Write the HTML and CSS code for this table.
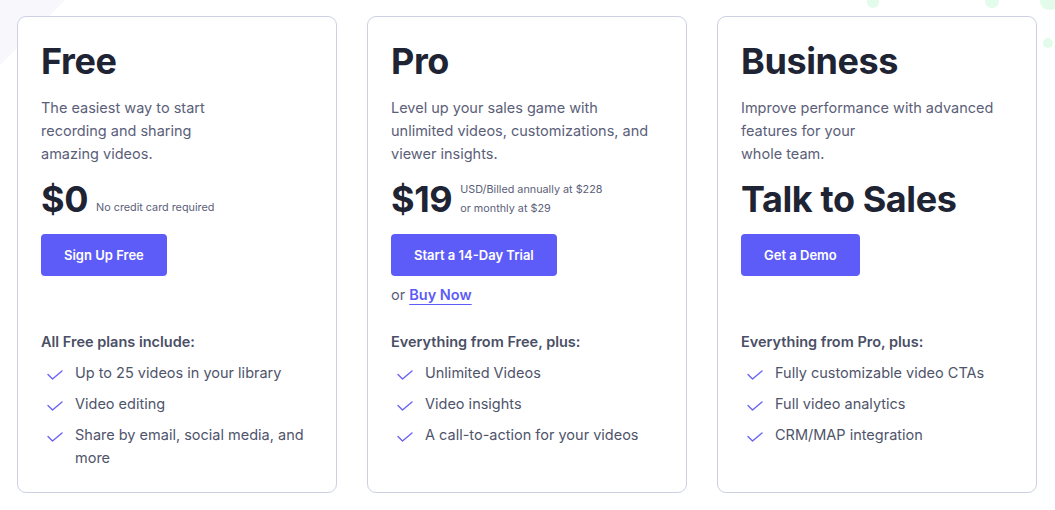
FILE: index.html
```html
<!DOCTYPE html>
<html lang="en">
<head>
<meta charset="utf-8">
<title>Pricing</title>
<link rel="stylesheet" href="styles.css">
</head>
<body>
<div class="bg-shape"></div>
<div class="dots">
  <span class="dot d1"></span>
  <span class="dot d2"></span>
  <span class="dot d3"></span>
  <span class="dot d4"></span>
</div>
<main class="plans">
  <section class="card">
    <h2 class="title">Free</h2>
    <p class="desc">The easiest way to start<br>recording and sharing<br>amazing videos.</p>
    <div class="price-row">
      <span class="price">$0</span>
      <span class="note single">No credit card required</span>
    </div>
    <div class="cta">
      <a class="btn">Sign Up Free</a>
    </div>
    <h3 class="incl">All Free plans include:</h3>
    <ul class="features">
      <li><svg class="check" viewBox="0 0 16 10"><path d="M1 4.5 L5.5 9 L15 1"/></svg><span>Up to 25 videos in your library</span></li>
      <li><svg class="check" viewBox="0 0 16 10"><path d="M1 4.5 L5.5 9 L15 1"/></svg><span>Video editing</span></li>
      <li><svg class="check" viewBox="0 0 16 10"><path d="M1 4.5 L5.5 9 L15 1"/></svg><span>Share by email, social media, and more</span></li>
    </ul>
  </section>
  <section class="card">
    <h2 class="title">Pro</h2>
    <p class="desc">Level up your sales game with<br>unlimited videos, customizations, and<br>viewer insights.</p>
    <div class="price-row">
      <span class="price">$19</span>
      <span class="note">USD/Billed annually at $228<br>or monthly at $29</span>
    </div>
    <div class="cta">
      <a class="btn">Start a 14-Day Trial</a>
      <p class="alt">or <a class="link">Buy Now</a></p>
    </div>
    <h3 class="incl">Everything from Free, plus:</h3>
    <ul class="features">
      <li><svg class="check" viewBox="0 0 16 10"><path d="M1 4.5 L5.5 9 L15 1"/></svg><span>Unlimited Videos</span></li>
      <li><svg class="check" viewBox="0 0 16 10"><path d="M1 4.5 L5.5 9 L15 1"/></svg><span>Video insights</span></li>
      <li><svg class="check" viewBox="0 0 16 10"><path d="M1 4.5 L5.5 9 L15 1"/></svg><span>A call-to-action for your videos</span></li>
    </ul>
  </section>
  <section class="card">
    <h2 class="title">Business</h2>
    <p class="desc">Improve performance with advanced<br>features for your<br>whole team.</p>
    <div class="price-row">
      <span class="price">Talk to Sales</span>
    </div>
    <div class="cta">
      <a class="btn">Get a Demo</a>
    </div>
    <h3 class="incl">Everything from Pro, plus:</h3>
    <ul class="features">
      <li><svg class="check" viewBox="0 0 16 10"><path d="M1 4.5 L5.5 9 L15 1"/></svg><span>Fully customizable video CTAs</span></li>
      <li><svg class="check" viewBox="0 0 16 10"><path d="M1 4.5 L5.5 9 L15 1"/></svg><span>Full video analytics</span></li>
      <li><svg class="check" viewBox="0 0 16 10"><path d="M1 4.5 L5.5 9 L15 1"/></svg><span>CRM/MAP integration</span></li>
    </ul>
  </section>
</main>
</body>
</html>
```
FILE: styles.css
```css
* { box-sizing: border-box; }
html, body { margin: 0; padding: 0; }
body {
  background: #ffffff;
  font-family: "Inter", "Noto Sans", sans-serif;
  color: #1e2433;
  width: 1055px;
  height: 510px;
  overflow: hidden;
  position: relative;
}
.bg-shape {
  position: absolute;
  left: -267px;
  top: -180px;
  width: 300px;
  height: 300px;
  background: #f7f7fc;
  transform: rotate(45deg);
  z-index: 0;
}
.dots { position: absolute; inset: 0; z-index: 0; }
.dot { position: absolute; border-radius: 50%; background: #e3fbea; }
.d1 { left: 867px; top: -4px; width: 12px; height: 12px; }
.d2 { left: 985px; top: -6px; width: 14px; height: 14px; }
.d3 { left: 1040px; top: -6px; width: 20px; height: 16px; }
.d4 { left: 1043px; top: 38px; width: 10px; height: 10px; }
.plans {
  position: relative;
  z-index: 1;
  display: grid;
  grid-template-columns: repeat(3, 320px);
  column-gap: 30px;
  padding: 16px 0 0 17px;
}
.card {
  background: #ffffff;
  border: 1px solid #cdd1e3;
  border-radius: 9px;
  padding: 23px 20px 0 23px;
  height: 477px;
  display: flex;
  flex-direction: column;
}
.title {
  margin: 0;
  font-size: 36px;
  line-height: 43px;
  font-weight: 700;
  color: #1e2433;
  letter-spacing: -0.4px;
}
.desc {
  margin: 13px 0 0;
  font-size: 14.5px;
  line-height: 23px;
  color: #5b6079;
}
.price-row {
  margin-top: 13px;
  display: flex;
  align-items: flex-end;
  gap: 8px;
}
.price {
  font-size: 36px;
  line-height: 43px;
  font-weight: 700;
  color: #1e2433;
  letter-spacing: -0.4px;
}
.note {
  font-size: 10.8px;
  line-height: 19px;
  color: #5b6079;
  padding-bottom: 3px;
}
.note.single { padding-bottom: 4px; }
.cta {
  margin-top: 13px;
  height: 96px;
}
.btn {
  display: inline-flex;
  align-items: center;
  height: 42px;
  padding: 0 23px;
  background: #5e5cf8;
  border-radius: 4px;
  color: #ffffff;
  font-size: 13px;
  font-weight: 600;
}
.alt {
  margin: 7px 0 0;
  font-size: 14.5px;
  line-height: 23px;
  color: #5b6079;
}
.link {
  color: #5e5cf8;
  font-weight: 600;
  text-decoration: underline;
  text-underline-offset: 4px;
  text-decoration-thickness: 1px;
}
.incl {
  margin: 0;
  font-size: 14.5px;
  line-height: 23px;
  font-weight: 600;
  color: #4a4f66;
}
.features {
  list-style: none;
  margin: 8px 0 0;
  padding: 0 0 0 6px;
  display: flex;
  flex-direction: column;
  gap: 8px;
}
.features li {
  display: flex;
  align-items: flex-start;
  gap: 12px;
  font-size: 14.5px;
  line-height: 23px;
  color: #4f546b;
}
.check {
  flex: none;
  width: 16px;
  height: 10px;
  margin-top: 9px;
  fill: none;
  stroke: #6a62f5;
  stroke-width: 1.4;
  stroke-linecap: round;
  stroke-linejoin: round;
}
```
